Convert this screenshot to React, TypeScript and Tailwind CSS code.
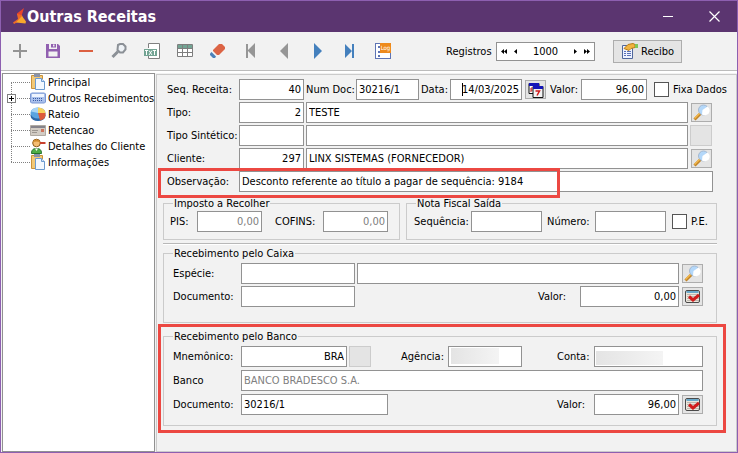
import type { ComponentProps, ReactNode } from "react";
import { clsx } from "clsx";

/* ---------- icons ---------- */

function ClipboardIcon() {
  return (
    <svg width="16" height="16" viewBox="0 0 16 16" className="shrink-0">
      <path d="M1.500 1.500h11v13h-11z" fill="#f3c976" stroke="#c9923a" />
      <path d="M4 0h6v3H4z" fill="#8a93a8" />
      <path d="M5.500 4.500h6l3 3v8h-9z" fill="#f2f8ff" stroke="#6c9bd0" />
      <path d="M11.500 4.500v3h3" fill="#cfe2f8" stroke="#6c9bd0" />
    </svg>
  );
}

function KeyboardIcon() {
  return (
    <svg width="16" height="16" viewBox="0 0 16 16" className="shrink-0">
      <path d="M.5 4l1-1h13l1 1v8l-1 1H1.500l-1-1z" fill="#a9c0ec" stroke="#7b98d4" />
      <path d="M2 4h12v3H2z" fill="#eef4ff" />
      <path d="M3 8.500h9M3 10.500h9" stroke="#3c5ca4" strokeDasharray="1 1" />
    </svg>
  );
}

function PieIcon() {
  return (
    <svg width="16" height="16" viewBox="0 0 16 16" className="shrink-0">
      <ellipse cx="8" cy="9.500" rx="7.500" ry="5.500" fill="#2c68a8" />
      <ellipse cx="8" cy="7" rx="7.500" ry="5.500" fill="#5aa4e0" />
      <path d="M8 7V1.500A7.500 5.500 0 0 1 15.500 7z" fill="#f7d25c" />
      <path d="M8 7h7.500v2.500A7 5.500 0 0 1 10 14.500z" fill="#dd5a3a" />
      <path d="M8 7L1 5.500A7.500 5.500 0 0 1 8 1.500z" fill="#a8d4f4" />
    </svg>
  );
}

function CardIcon() {
  return (
    <svg width="16" height="16" viewBox="0 0 16 16" className="shrink-0">
      <path d="M.5 3.500h15v10H.5z" fill="#d2ccc4" stroke="#b0aaa2" />
      <path d="M1 4h14v2H1z" fill="#85838a" />
      <path d="M2 8.500h6M2 10.500h5" stroke="#9c9690" />
      <path d="M11 7h3v3h-3z" fill="#d0745c" />
    </svg>
  );
}

function PersonIcon() {
  return (
    <svg width="16" height="16" viewBox="0 0 16 16" className="shrink-0">
      <path d="M1.500 15.500c0-4 2-5 5-5s5 1 5 5z" fill="#4fae48" stroke="#23722a" />
      <path d="M5 10.500L6.500 13 8 10.500z" fill="#fff" />
      <circle cx="6.500" cy="5" r="3.800" fill="#f5bd72" stroke="#8a5a1c" />
      <path d="M2.700 4.500C3 .5 10 .5 10.300 4.500 8 3 5 3 2.700 4.500z" fill="#d08a2c" />
      <path d="M10 5h5.500" stroke="#c8402c" strokeWidth="2" />
    </svg>
  );
}

function LensIcon() {
  return (
    <svg width="17" height="17" viewBox="0 0 17 17">
      <path d="M1.500 15.500l6-6" stroke="#c08428" strokeWidth="3" />
      <path d="M1.500 14.500l6-6" stroke="#f3b84c" strokeWidth="1.400" />
      <circle cx="10.500" cy="6" r="5" fill="#b4d8fa" stroke="#a4b8d0" />
      <path d="M9 10.500L9.500 6l5-3.500a4.800 4.800 0 0 1-5.500 8z" fill="#fff" />
    </svg>
  );
}

function CalendarIcon() {
  return (
    <svg width="16" height="16" viewBox="0 0 16 16">
      <path d="M1 1.500h10v10H1z" fill="#fff" stroke="#111" />
      <path d="M1 1h10v3H1z" fill="#1414b8" />
      <path d="M3 6v4M3 6h1.500M3 8h1.500" stroke="#c01818" />
      <path d="M5 4.500h10v11H5z" fill="#f2f2f2" stroke="#111" />
      <path d="M5 4h10v3H5z" fill="#1414b8" />
      <path d="M7.500 9h4l-2.500 4.500" fill="none" stroke="#d01818" strokeWidth="1.500" />
    </svg>
  );
}

function CheckCalendarIcon() {
  return (
    <svg width="16" height="14" viewBox="0 0 16 14">
      <rect x=".5" y=".5" width="14" height="12" rx="1.500" fill="#ece6dc" stroke="#4a4a4a" />
      <path d="M1.500 2h12" stroke="#3e94c4" strokeWidth="1.500" />
      <path d="M2.500 4.500h11M2.500 6.500h11M2.500 8.500h11M2.500 10.500h11" stroke="#8f8b84" strokeDasharray="1 1" />
      <path d="M4 6.500l4 3.500 6-5" fill="none" stroke="#d01c1c" strokeWidth="3" />
    </svg>
  );
}

function ReceiptIcon() {
  return (
    <svg width="17" height="17" viewBox="0 0 17 17">
      <path d="M1.500 2.500h10v13h-10z" fill="#eef3ff" stroke="#50679c" />
      <path d="M3 8.500h2M3 10.500h2M3 12.500h2M6 8.500h4M6 10.500h4M6 12.500h4" stroke="#5a70b8" />
      <path d="M3 5.500l4-4 5-1 2 1v3l-4 1-2 2z" fill="#f1b441" stroke="#b97d18" />
      <path d="M14 1h3v4h-3z" fill="#7fc75a" />
    </svg>
  );
}

function LogoIcon() {
  return (
    <svg width="14" height="17" viewBox="0 0 14 17" className="shrink-0">
      <path d="M11 0L8.500 8 4 7V5.500z" fill="#e8452c" />
      <path d="M4 6l5 1 1 4-9 5-1-1.500L5 11z" fill="#ef6a26" />
      <path d="M9 8l4 5.500-.5 2L3 14.500z" fill="#f8a82c" />
    </svg>
  );
}

/* ---------- toolbar ---------- */

const tools: { name: string; icon: ReactNode }[] = [
  { name: "Incluir", icon: <path d="M8 1v14M1 8h14" stroke="#949494" strokeWidth="2" /> },
  {
    name: "Salvar",
    icon: (
      <>
        <path d="M1 1h3v5h8V1h1l2 2v12H1z" fill="#9160b0" />
        <path d="M6 1h5v3.500H6z" fill="#9160b0" />
        <path d="M8 1.500h1.500v2H8z" fill="#f2f2f2" />
        <path d="M3.500 8.500h9v5h-9z" fill="#f2f2f2" />
      </>
    ),
  },
  { name: "Excluir", icon: <path d="M1 8h14" stroke="#dc6041" strokeWidth="2" /> },
  {
    name: "Pesquisar",
    icon: (
      <>
        <path d="M7 2l2-1h3l2.500 2.500v3L12 9.500H9L6.500 7z" fill="#eef2f6" stroke="#8b9096" strokeWidth="2" />
        <path d="M1.500 14l5.500-5.500" stroke="#8b9096" strokeWidth="3" />
      </>
    ),
  },
  {
    name: "Exportar TXT",
    icon: (
      <>
        <path d="M4.500 5V.5h11v15h-11V13" fill="#fff" stroke="#808080" />
        <path d="M0 6h13v7H0z" fill="#72a493" />
        <path d="M1 7.500h3M2.500 7.500V12M5 7.500L8 12M8 7.500L5 12M9 7.500h3M10.500 7.500V12" stroke="#fff" />
      </>
    ),
  },
  {
    name: "Tabela",
    icon: (
      <>
        <path d="M.5 1.500h15v12H.5z" fill="#fff" stroke="#7e7e7e" />
        <path d="M1 2h14v3H1z" fill="#72a493" />
        <path d="M0 5.500h16M0 9.500h16M5.500 1v13M10.500 1v13" stroke="#7e7e7e" />
      </>
    ),
  },
  {
    name: "Limpar",
    icon: (
      <>
        <path d="M9 1h3l3 3v2l-6 6H7L3 8V7z" fill="#dc6445" />
        <path d="M1.500 9L6 13.500 5 15H3L0 12v-1.500z" fill="#4c80b8" />
      </>
    ),
  },
  { name: "Primeiro", icon: <path d="M3 1h2v6l7-7v15L5 8v7H3z" fill="#969696" /> },
  { name: "Anterior", icon: <path d="M12 0v16L4 8z" fill="#969696" /> },
  { name: "Próximo", icon: <path d="M5 0v16l8-8z" fill="#4480bd" /> },
  { name: "Último", icon: <path d="M3 1v14l7-7v7h2V1h-2v7z" fill="#4480bd" /> },
];

function Toolbar() {
  return (
    <div className="flex h-[39px] items-center border-b border-[#bcbcbc] pl-[11px]">
      <div className="flex gap-[17px]">
        {tools.map((t) => (
          <button key={t.name} type="button" aria-label={t.name} className="size-4">
            <svg width="16" height="16" viewBox="0 0 16 16">
              {t.icon}
            </svg>
          </button>
        ))}
        <button type="button" className="relative size-4 border border-[#5e74b4] bg-white">
          <span className="absolute top-[2px] left-[2px] h-[11px] border-l-2 border-dotted border-[#5e74b4]" />
          <span className="absolute -top-px left-1 h-[10px] w-[11px] bg-[#ee8a1c] text-center text-[6px] leading-[9px] text-white">
            Log
          </span>
        </button>
      </div>
      <label htmlFor="registros" className="ml-[55px] w-[50px]">
        Registros
      </label>
      <div className="flex h-[19px] w-[99px] items-center justify-between border border-[#929292] bg-white px-1">
        <button type="button" aria-label="Voltar página">
          <svg width="7" height="5" viewBox="0 0 7 5">
            <path d="M3 0v5L0 2.500zM6 0v5L3 2.500z" />
          </svg>
        </button>
        <button type="button" aria-label="Voltar">
          <svg width="3" height="5" viewBox="0 0 3 5">
            <path d="M3 0v5L0 2.500z" />
          </svg>
        </button>
        <input id="registros" defaultValue="1000" className="w-[46px] text-center outline-none" />
        <button type="button" aria-label="Avançar">
          <svg width="3" height="5" viewBox="0 0 3 5">
            <path d="M0 0v5l3-2.500z" />
          </svg>
        </button>
        <button type="button" aria-label="Avançar página">
          <svg width="7" height="5" viewBox="0 0 7 5">
            <path d="M1 0v5l3-2.500zM4 0v5l3-2.500z" />
          </svg>
        </button>
      </div>
      <button
        type="button"
        className="ml-[18px] flex h-[23px] w-[69px] items-center justify-center gap-[3px] border border-[#adadad] bg-[#e4e4e4]"
      >
        <ReceiptIcon />
        Recibo
      </button>
    </div>
  );
}

/* ---------- tree ---------- */

const treeItems = [
  { label: "Principal", icon: <ClipboardIcon /> },
  { label: "Outros Recebimentos", icon: <KeyboardIcon />, expandable: true },
  { label: "Rateio", icon: <PieIcon /> },
  { label: "Retencao", icon: <CardIcon /> },
  { label: "Detalhes do Cliente", icon: <PersonIcon /> },
  { label: "Informações", icon: <ClipboardIcon /> },
];

function Tree() {
  return (
    <nav className="w-[153px] shrink-0 border border-[#919191] bg-white">
      <ul className="relative">
        <li
          aria-hidden="true"
          className="absolute top-2 bottom-2 left-2 border-l border-dotted border-[#808080]"
        />
        {treeItems.map((item) => (
          <li key={item.label} className="relative flex h-4 items-center pl-2">
            <span className="w-[19px] shrink-0 border-t border-dotted border-[#808080]" />
            {item.expandable && (
              <button
                type="button"
                aria-label="Expandir"
                className="absolute left-1 flex size-[9px] items-center justify-center border border-[#808080] bg-white"
              >
                <svg width="5" height="5" viewBox="0 0 5 5">
                  <path d="M0 2.500h5M2.500 0v5" stroke="#000" />
                </svg>
              </button>
            )}
            {item.icon}
            <span className="ml-[2px] whitespace-nowrap">{item.label}</span>
          </li>
        ))}
      </ul>
    </nav>
  );
}

/* ---------- form parts ---------- */

function Field({ className, ...rest }: ComponentProps<"input">) {
  return (
    <input
      className={clsx(
        "h-[21px] min-w-0 border border-[#929292] bg-white px-[2px] outline-none disabled:text-[#808080]",
        className,
      )}
      {...rest}
    />
  );
}

function Label({ className, ...rest }: ComponentProps<"label">) {
  return <label className={clsx("shrink-0 whitespace-nowrap", className)} {...rest} />;
}

function IconButton({ label, children, className }: { label: string; children?: ReactNode; className?: string }) {
  return (
    <button
      type="button"
      aria-label={label}
      disabled={!children}
      className={clsx(
        "flex shrink-0 items-center justify-center border border-[#adadad] bg-[#e4e4e4] disabled:border-[#cccccc]",
        className,
      )}
    >
      {children}
    </button>
  );
}

function Check({ id }: { id: string }) {
  return (
    <input
      id={id}
      type="checkbox"
      className="size-[15px] shrink-0 appearance-none border border-[#555555] bg-white"
    />
  );
}

function Group({
  title,
  className,
  bodyClassName,
  children,
}: {
  title: string;
  className?: string;
  bodyClassName?: string;
  children: ReactNode;
}) {
  return (
    <fieldset className={clsx("min-w-0 border border-[#cbcbcb]", className)}>
      <legend className="ml-[9px] h-[13px] px-px leading-[13px]">{title}</legend>
      <div className={clsx("flex flex-col", bodyClassName)}>{children}</div>
    </fieldset>
  );
}

function Row({ children, className }: { children: ReactNode; className?: string }) {
  return <div className={clsx("flex items-center", className)}>{children}</div>;
}

function Form() {
  return (
    <main className="relative mt-px ml-px flex-1 border border-[#cbcbcb] pt-1 pr-[19px] pb-[25px] pl-[6px]">
      <div className="flex flex-col gap-[2px] px-1">
        <Row className="-mr-4">
          <Label htmlFor="seq" className="w-[72px]">Seq. Receita:</Label>
          <Field id="seq" defaultValue="40" className="w-[65px] text-right" />
          <Label htmlFor="numdoc" className="ml-[2px] w-[50px]">Num Doc:</Label>
          <Field id="numdoc" defaultValue="30216/1" className="w-[63px]" />
          <Label htmlFor="data" className="ml-[2px] w-[29px]">Data:</Label>
          <div className="relative flex">
            <Field id="data" defaultValue="14/03/2025" className="w-[72px] text-right" />
            <span className="absolute top-1 left-3 h-[13px] w-px bg-black" />
          </div>
          <IconButton label="Abrir calendário" className="ml-[3px] h-[19px] w-[21px]">
            <CalendarIcon />
          </IconButton>
          <Label htmlFor="valor" className="ml-1 w-[31px]">Valor:</Label>
          <Field id="valor" defaultValue="96,00" className="mr-[7px] w-[66px] text-right" />
          <Check id="fixa" />
          <Label htmlFor="fixa" className="ml-1">Fixa Dados</Label>
        </Row>
        <Row>
          <Label htmlFor="tipo" className="w-[72px]">Tipo:</Label>
          <Field id="tipo" defaultValue="2" className="w-[65px] text-right" />
          <Field aria-label="Descrição do tipo" defaultValue="TESTE" className="mr-[3px] ml-[2px] flex-1" />
          <IconButton label="Buscar tipo" className="mr-px h-[19px] w-[21px]">
            <LensIcon />
          </IconButton>
        </Row>
        <Row>
          <Label htmlFor="sintetico" className="w-[72px]">Tipo Sintético:</Label>
          <Field id="sintetico" className="w-[65px]" />
          <Field aria-label="Descrição do tipo sintético" className="mr-[2px] ml-[2px] flex-1" />
          <IconButton label="Buscar tipo sintético" className="mr-px h-[21px] w-[22px]" />
        </Row>
        <Row>
          <Label htmlFor="cliente" className="w-[72px]">Cliente:</Label>
          <Field id="cliente" defaultValue="297" className="w-[65px] text-right" />
          <Field
            aria-label="Nome do cliente"
            defaultValue="LINX SISTEMAS (FORNECEDOR)"
            className="mr-[3px] ml-[2px] flex-1"
          />
          <IconButton label="Buscar cliente" className="mr-px h-[19px] w-[21px]">
            <LensIcon />
          </IconButton>
        </Row>
        <Row className="relative">
          <Label htmlFor="obs" className="w-[72px]">Observação:</Label>
          <Field
            id="obs"
            defaultValue="Desconto referente ao título a pagar de sequência: 9184"
            className="flex-1"
          />
          <span className="pointer-events-none absolute -top-[3px] -left-[9px] h-[30px] w-[402px] border-3 border-[#ec4842]" />
        </Row>
      </div>

      <div className="mt-[5px] flex gap-[6px]">
        <Group title="Imposto a Recolher" className="w-[237px]" bodyClassName="pt-px pb-[7px] pl-[6px]">
          <Row>
            <Label htmlFor="pis" className="w-[27px]">PIS:</Label>
            <Field id="pis" disabled defaultValue="0,00" className="w-[65px] text-right" />
            <Label htmlFor="cofins" className="ml-[13px] w-[48px]">COFINS:</Label>
            <Field id="cofins" disabled defaultValue="0,00" className="w-[65px] text-right" />
          </Row>
        </Group>
        <Group title="Nota Fiscal Saída" className="flex-1" bodyClassName="pt-px pb-[7px] pl-[7px]">
          <Row>
            <Label htmlFor="nfseq" className="w-[57px]">Sequência:</Label>
            <Field id="nfseq" className="w-[71px]" />
            <Label htmlFor="nfnum" className="ml-[5px] w-[48px]">Número:</Label>
            <Field id="nfnum" className="mr-[6px] w-[71px]" />
            <Check id="pe" />
            <Label htmlFor="pe" className="ml-1">P.E.</Label>
          </Row>
        </Group>
      </div>

      <hr className="mt-[3px] h-[2px] border-t border-b border-t-[#b8b8b8] border-b-white" />

      <Group
        title="Recebimento pelo Caixa"
        className="mt-[2px]"
        bodyClassName="gap-[2px] pt-[3px] pr-[13px] pb-[15px] pl-[9px]"
      >
        <Row>
          <Label htmlFor="especie" className="w-[68px]">Espécie:</Label>
          <Field id="especie" className="w-[114px]" />
          <Field aria-label="Descrição da espécie" className="mr-[3px] ml-[2px] flex-1" />
          <IconButton label="Buscar espécie" className="h-[19px] w-[21px]">
            <LensIcon />
          </IconButton>
        </Row>
        <Row>
          <Label htmlFor="cxdoc" className="w-[68px]">Documento:</Label>
          <Field id="cxdoc" className="w-[114px]" />
          <Label htmlFor="cxvalor" className="ml-auto w-[42px]">Valor:</Label>
          <Field id="cxvalor" defaultValue="0,00" className="mr-[3px] w-[99px] text-right" />
          <IconButton label="Confirmar caixa" className="h-[19px] w-[21px]">
            <CheckCalendarIcon />
          </IconButton>
        </Row>
      </Group>

      <div className="relative mt-[7px]">
        <Group
          title="Recebimento pelo Banco"
          bodyClassName="gap-[3px] pt-[3px] pr-[13px] pb-[10px] pl-[9px]"
        >
          <Row>
            <Label htmlFor="mnem" className="w-[68px]">Mnemônico:</Label>
            <Field id="mnem" defaultValue="BRA" className="mr-[2px] w-[106px] text-right" />
            <IconButton label="Buscar banco" className="h-[21px] w-[22px]" />
            <Label htmlFor="agencia" className="ml-[30px] w-[47px]">Agência:</Label>
            <div className="relative flex">
              <Field id="agencia" className="w-[74px]" />
              <span className="absolute top-[2px] left-[3px] h-4 w-12 bg-linear-to-r from-[#e4e4e4] to-[#f4f4f4]" />
            </div>
            <Label htmlFor="conta" className="ml-auto w-[37px]">Conta:</Label>
            <div className="relative flex">
              <Field id="conta" className="w-[109px]" />
              <span className="absolute top-[5px] left-[2px] h-[14px] w-[67px] bg-linear-to-r from-[#e4e4e4] to-[#f4f4f4]" />
            </div>
          </Row>
          <Row>
            <Label htmlFor="banco" className="w-[68px]">Banco</Label>
            <Field id="banco" disabled defaultValue="BANCO BRADESCO S.A." className="flex-1" />
          </Row>
          <Row>
            <Label htmlFor="bdoc" className="w-[68px]">Documento:</Label>
            <Field id="bdoc" defaultValue="30216/1" className="w-[147px]" />
            <Label htmlFor="bvalor" className="ml-auto w-[37px]">Valor:</Label>
            <Field id="bvalor" defaultValue="96,00" className="mr-[3px] w-[85px] text-right" />
            <IconButton label="Confirmar banco" className="h-[19px] w-[21px]">
              <CheckCalendarIcon />
            </IconButton>
          </Row>
        </Group>
        <span className="pointer-events-none absolute -top-[6px] -right-[9px] -bottom-[7px] -left-[5px] border-3 border-[#ec4842]" />
      </div>
    </main>
  );
}

/* ---------- window ---------- */

export default function App() {
  return (
    <div className="flex min-h-screen flex-col border border-[#8d5fb0] bg-[#f2f2f2] font-['DejaVu_Sans_Condensed','DejaVu_Sans',sans-serif] text-[11px] leading-[13px] text-black">
      <header className="flex h-[31px] items-center bg-[#5b3570] pl-3 text-white">
        <LogoIcon />
        <h1 className="text-[16px] leading-5 font-bold">Outras Receitas</h1>
        <button type="button" aria-label="Minimizar" className="ml-auto">
          <svg width="10" height="11" viewBox="0 0 10 11">
            <path d="M0 5.500h10" stroke="#fff" />
          </svg>
        </button>
        <button type="button" aria-label="Fechar" className="mr-[17px] ml-9">
          <svg width="11" height="11" viewBox="0 0 11 11">
            <path d="M.5.5l10 10M10.500.5l-10 10" stroke="#fff" strokeWidth="1.200" />
          </svg>
        </button>
      </header>
      <Toolbar />
      <div className="flex flex-1 border-t-2 border-white pl-px">
        <Tree />
        <Form />
      </div>
    </div>
  );
}
